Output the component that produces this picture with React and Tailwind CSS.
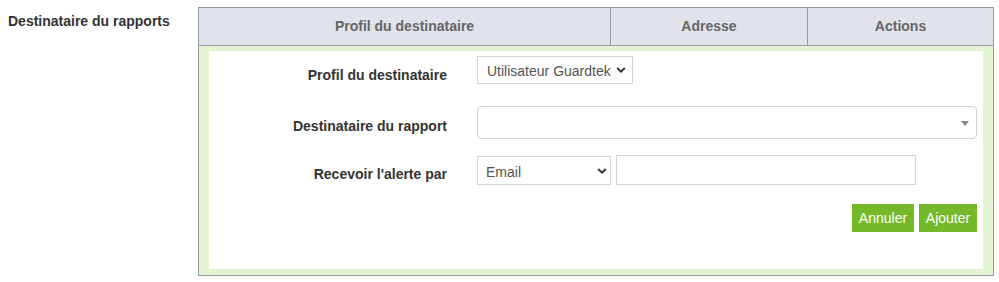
import React from 'react';

const Chevron = ({ className }) => (
  <svg width="10" height="7" viewBox="0 0 10 7" className={`pointer-events-none absolute top-1/2 -translate-y-1/2 ${className}`}>
    <polyline points="1.2,1.5 5,5.2 8.8,1.5" fill="none" stroke="#333" strokeWidth="2" />
  </svg>
);

const App = () => {
  return (
    <div className="flex items-start pt-[7px] font-['Liberation_Sans',Arial,sans-serif] text-[#333]">
      <div className="w-[198px] shrink-0 pl-2 pt-[4px] text-[14px] font-bold leading-5">Destinataire du rapports</div>

      <div className="w-[796px] shrink-0 border border-[#999ba8]">
        {/* header */}
        <div className="flex h-[38px] border-b border-[#999ba8] bg-[#e0e3eb] text-[14px] font-bold text-[#666]">
          <div className="flex w-[412px] items-center justify-center border-r border-[#999ba8]">Profil du destinataire</div>
          <div className="flex w-[197px] items-center justify-center border-r border-[#999ba8]">Adresse</div>
          <div className="flex flex-1 items-center justify-center">Actions</div>
        </div>

        {/* body */}
        <div className="bg-[#e3f4d3] pt-[5px] pb-[6px] px-[10px]">
          <div className="h-[218px] bg-white pt-[5px] pr-[6px]">
            <div className="flex items-start">
              <div className="w-[238px] pt-[9px] text-right text-[14px] font-bold leading-5">Profil du destinataire</div>
              <div className="relative ml-[30px]">
                <select className="h-[28px] w-[156px] appearance-none border border-[#d4d4d4] bg-white pl-[9px] pt-[3px] text-[14px] text-[#555] outline-none">
                  <option>Utilisateur Guardtek</option>
                </select>
                <Chevron className="right-[7px]" />
              </div>
            </div>

            <div className="mt-[21px] flex items-start">
              <div className="w-[238px] pt-[10px] text-right text-[14px] font-bold leading-5">Destinataire du rapport</div>
              <div className="relative ml-[30px] h-[33px] flex-1 rounded-[4px] border border-[#d0d0d0] bg-white">
                <span className="absolute right-[7px] top-[14px] h-0 w-0 border-x-[4px] border-t-[5px] border-x-transparent border-t-[#888]" />
              </div>
            </div>

            <div className="mt-[16px] flex items-start">
              <div className="w-[238px] pt-[9px] text-right text-[14px] font-bold leading-5">Recevoir l'alerte par</div>
              <div className="relative ml-[30px] mt-[1px]">
                <select className="h-[29px] w-[134px] appearance-none border border-[#d4d4d4] bg-white pl-[8px] pt-[3px] text-[14px] text-[#555] outline-none">
                  <option>Email</option>
                </select>
                <Chevron className="right-[4px]" />
              </div>
              <input type="text" className="ml-[5px] h-[30px] w-[300px] border border-[#d4d4d4] bg-white outline-none" />
            </div>

            <div className="mt-[19px] flex justify-end gap-[5px]">
              <button className="h-[28px] w-[62px] bg-[#75b82a] text-[14px] text-white">Annuler</button>
              <button className="h-[28px] w-[58px] bg-[#75b82a] text-[14px] text-white">Ajouter</button>
            </div>
          </div>
        </div>
      </div>
    </div>
  );
};

export default App;
